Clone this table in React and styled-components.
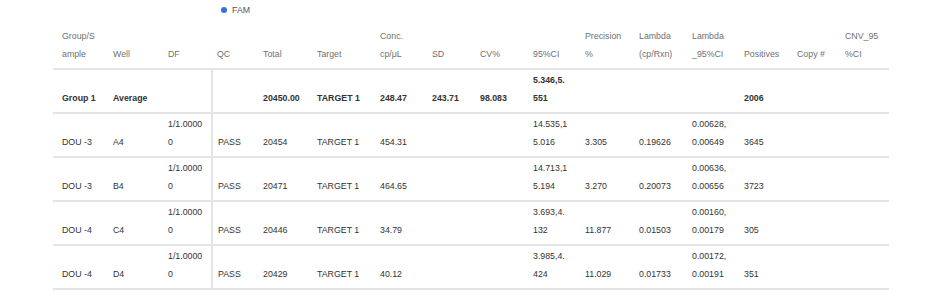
import React from 'react'
import styled, { createGlobalStyle } from 'styled-components';

const GlobalStyle = createGlobalStyle`
html,body{
  margin:0;
  padding:0;
  background:#fff;
}
body{
  font-family:"Liberation Sans", Arial, sans-serif;
}
`;

const columns = [
  { key: "group", title: "Group/Sample", width: 51 },
  { key: "well", title: "Well", width: 55 },
  { key: "df", title: "DF", width: 53 },
  { key: "qc", title: "QC", width: 42, split: true },
  { key: "total", title: "Total", width: 54 },
  { key: "target", title: "Target", width: 63 },
  { key: "conc", title: "Conc. cp/μL", width: 52 },
  { key: "sd", title: "SD", width: 48 },
  { key: "cv", title: "CV%", width: 53 },
  { key: "ci", title: "95%CI", width: 52 },
  { key: "precision", title: "Precision %", width: 54 },
  { key: "lambda", title: "Lambda (cp/Rxn)", width: 53 },
  { key: "lambdaCi", title: "Lambda _95%CI", width: 52 },
  { key: "positives", title: "Positives", width: 53 },
  { key: "copy", title: "Copy #", width: 48 },
  { key: "cnv", title: "CNV_95%CI", width: 53 },
];

const rows = [
  {
    bold: true,
    group: "Group 1", well: "Average", df: "", qc: "", total: "20450.00", target: "TARGET 1",
    conc: "248.47", sd: "243.71", cv: "98.083", ci: "5.346,5.551", precision: "", lambda: "",
    lambdaCi: "", positives: "2006", copy: "", cnv: "",
  },
  {
    group: "DOU -3", well: "A4", df: "1/1.00000", qc: "PASS", total: "20454", target: "TARGET 1",
    conc: "454.31", sd: "", cv: "", ci: "14.535,15.016", precision: "3.305", lambda: "0.19626",
    lambdaCi: "0.00628, 0.00649", positives: "3645", copy: "", cnv: "",
  },
  {
    group: "DOU -3", well: "B4", df: "1/1.00000", qc: "PASS", total: "20471", target: "TARGET 1",
    conc: "464.65", sd: "", cv: "", ci: "14.713,15.194", precision: "3.270", lambda: "0.20073",
    lambdaCi: "0.00636, 0.00656", positives: "3723", copy: "", cnv: "",
  },
  {
    group: "DOU -4", well: "C4", df: "1/1.00000", qc: "PASS", total: "20446", target: "TARGET 1",
    conc: "34.79", sd: "", cv: "", ci: "3.693,4.132", precision: "11.877", lambda: "0.01503",
    lambdaCi: "0.00160, 0.00179", positives: "305", copy: "", cnv: "",
  },
  {
    group: "DOU -4", well: "D4", df: "1/1.00000", qc: "PASS", total: "20429", target: "TARGET 1",
    conc: "40.12", sd: "", cv: "", ci: "3.985,4.424", precision: "11.029", lambda: "0.01733",
    lambdaCi: "0.00172, 0.00191", positives: "351", copy: "", cnv: "",
  },
];

const Page=styled.div`
width:934px;
height:296px;
overflow:hidden;
background:#fff;
`;

const Legend=styled.div`
display:flex;
align-items:center;
gap:5px;
padding:3px 0 0 221px;
height:14px;
font-size:8.8px;
color:#555;
`;

const Dot=styled.span`
width:6px;
height:6px;
border-radius:50%;
background:${(props)=>props.color};
`;

const Table=styled.table`
margin:8px 0 0 53px;
width:836px;
border-collapse:collapse;
table-layout:fixed;
font-size:8.8px;
`;

const HeadCell=styled.th`
text-align:left;
font-weight:normal;
color:#707070;
line-height:18px;
padding:2px 7px 5px ${(props)=>props.$split?"5px":"9px"};
overflow-wrap:anywhere;
vertical-align:bottom;
border-bottom:2px solid #e4e4e4;
`;

const Cell=styled.td`
color:#333;
font-weight:${(props)=>props.$bold?"bold":"normal"};
line-height:17.5px;
padding:2px 7px 5px ${(props)=>props.$split?"5px":"9px"};
height:35px;
overflow-wrap:anywhere;
vertical-align:bottom;
border-bottom:2px solid #e4e4e4;
border-left:${(props)=>props.$split?"2px solid #e4e4e4":"none"};
`;

const App = () => {
  return (
    <Page>
      <GlobalStyle/>
      <Legend>
        <Dot color="#3a6fd8"/>
        FAM
      </Legend>
      <Table>
        <colgroup>
          {columns.map((col)=>(<col key={col.key} style={{width:col.width}}/>))}
        </colgroup>
        <thead>
          <tr>
            {columns.map((col)=>(
              <HeadCell key={col.key} $split={col.split}>{col.title}</HeadCell>
            ))}
          </tr>
        </thead>
        <tbody>
          {rows.map((row,i)=>(
            <tr key={i}>
              {columns.map((col)=>(
                <Cell key={col.key} $bold={row.bold} $split={col.split}>{row[col.key]}</Cell>
              ))}
            </tr>
          ))}
        </tbody>
      </Table>
    </Page>
  )
}

export default App
